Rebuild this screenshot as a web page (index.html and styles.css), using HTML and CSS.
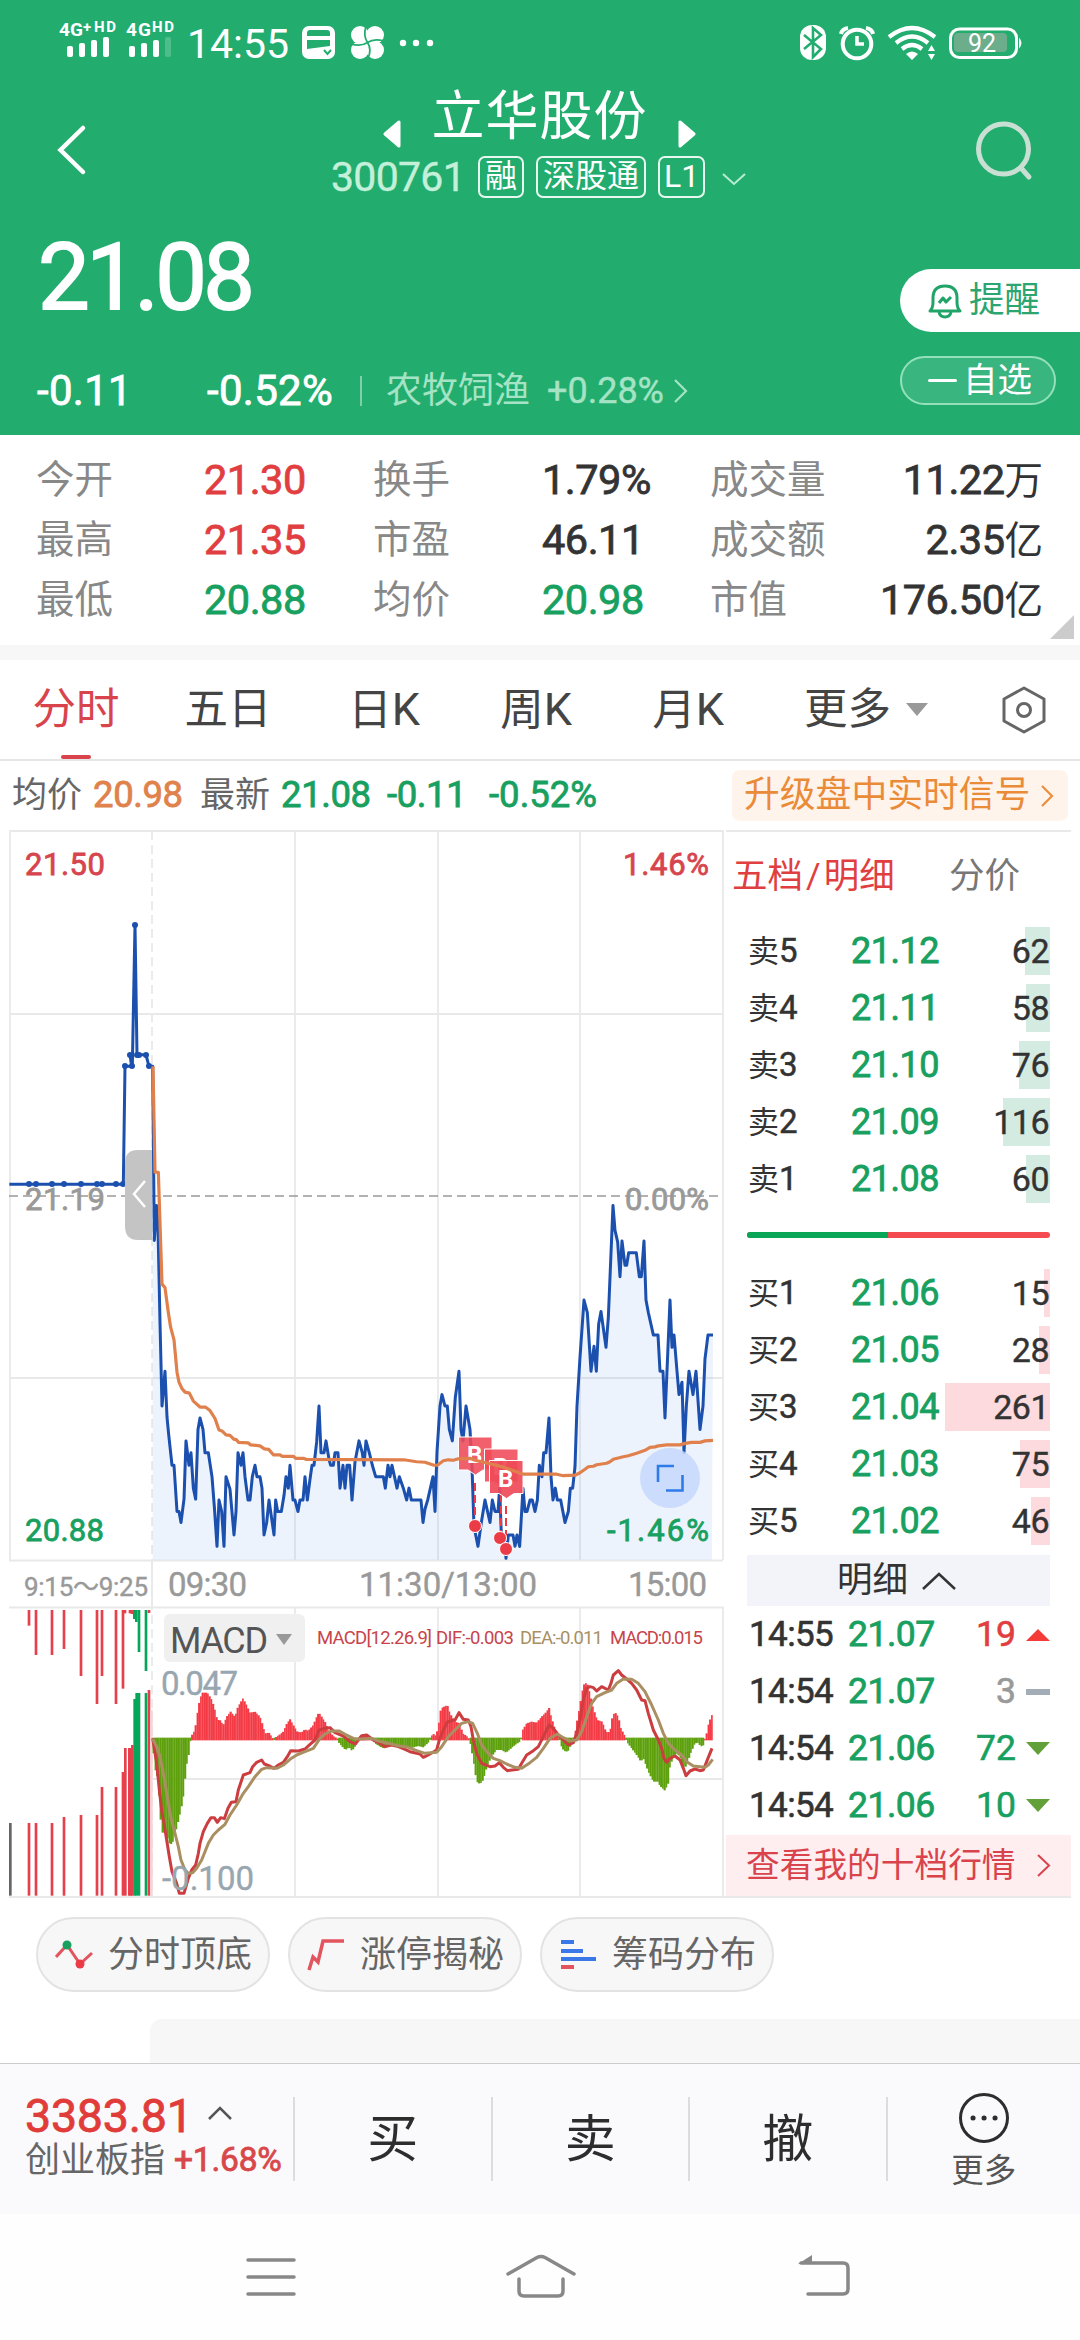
FILE: index.html
```html
<!DOCTYPE html>
<html lang="zh-CN">

<head>
    <meta charset="UTF-8">
    <meta name="viewport" content="width=device-width, initial-scale=1.0">
    <title>立华股份 300761</title>
    <link rel="stylesheet" href="styles.css">
</head>

<body>
    <header>
        <div class="statusbar">
            <svg class="signals" width="120" height="54" viewBox="58 10 120 54" fill="#fff">
                <g font-weight="700" font-size="19">
                    <text x="59" y="36" textLength="24">4G</text>
                    <text x="83" y="32" font-size="15">+</text>
                    <text x="94" y="32" font-size="15" textLength="22">HD</text>
                    <text x="126" y="36" textLength="25">4G</text>
                    <text x="152" y="32" font-size="15" textLength="22">HD</text>
                </g>
                <rect x="67" y="46" width="6" height="11" rx="2" />
                <rect x="79" y="43" width="6" height="14" rx="2" />
                <rect x="91" y="40" width="6" height="17" rx="2" />
                <rect x="103" y="37" width="6" height="20" rx="2" />
                <rect x="129" y="46" width="6" height="11" rx="2" />
                <rect x="141" y="43" width="6" height="14" rx="2" />
                <rect x="153" y="40" width="6" height="17" rx="2" />
                <rect x="165" y="37" width="6" height="20" rx="2" opacity=".2" />
            </svg>
            <span class="clock">14:55</span>
            <svg class="apps" width="134" height="36" viewBox="300 25 134 36">
                <rect x="301" y="26" width="33" height="33" rx="7" fill="#fff" />
                <path d="M306 36v-3q0-3 3-3h17q3 0 3 3v3zM306 40h23v6l-23 3z" fill="#22ad6f" />
                <path d="M323 50l3.500 4 3.500-4" fill="none" stroke="#22ad6f" stroke-width="2" />
                <g fill="#fff">
                    <circle cx="359" cy="35" r="9" />
                    <circle cx="374" cy="35" r="9" />
                    <circle cx="359" cy="50" r="9" />
                    <circle cx="374" cy="50" r="9" />
                    <rect x="359" y="35" width="15" height="15" />
                </g>
                <path d="M365 26q-3 10 1.500 16.500T367 59M350 44q10 3 16.500-1.500T383 41" fill="none" stroke="#22ad6f" stroke-width="1.800" />
                <g fill="#fff">
                    <circle cx="402" cy="43" r="3.200" />
                    <circle cx="415" cy="43" r="3.200" />
                    <circle cx="429" cy="43" r="3.200" />
                </g>
            </svg>
            <svg class="system" width="226" height="40" viewBox="797 23 226 40" fill="none" stroke="#fff">
                <rect x="799" y="25" width="26" height="35" rx="12" fill="#fff" stroke="none" />
                <path d="M803 35l17 14-8 8V28l8 7-17 14" stroke="#22ad6f" stroke-width="2.600" />
                <circle cx="856" cy="44" r="14.300" stroke-width="4" />
                <path d="M856 36v8h7" stroke-width="3.500" />
                <path d="M840 34q1-5 7-6M872 34q-1-5-7-6" stroke-width="4" />
                <path d="M888 37q23-18 46 0M895 43q16-13 32 0M901 49q10-8 20 0" stroke-width="4.200" />
                <path d="M905 54q6-5 12 0l-6 6z" fill="#fff" stroke="none" />
                <path d="M927 51l3.500-6 3.500 6zM927 54l3.500 6 3.500-6z" fill="#fff" stroke="none" />
                <rect x="953" y="33" width="53" height="19" rx="4" fill="#6cad8c" stroke="none" />
                <rect x="949.500" y="29" width="66" height="28.500" rx="9" stroke-width="3" />
                <path d="M1018 37.500q5 5.500 0 11z" fill="#fff" stroke="none" />
                <text x="967" y="52" font-size="25" fill="#fff" stroke="none">92</text>
            </svg>
        </div>

        <div class="titlebar">
            <svg width="30" height="52" viewBox="57 124 30 52" fill="none" stroke="#fff" stroke-width="4.500" stroke-linecap="round">
                <path d="M83 128L60.500 150 83 172" />
            </svg>
            <div class="stock">
                <div class="stock-name">
                    <svg width="18" height="28" viewBox="0 0 18 28"><path d="M16 2v24L2 14z" fill="#fff" stroke="#fff" stroke-width="3" stroke-linejoin="round" /></svg>
                    <h1>立华股份</h1>
                    <svg width="18" height="28" viewBox="0 0 18 28"><path d="M2 2v24l14-12z" fill="#fff" stroke="#fff" stroke-width="3" stroke-linejoin="round" /></svg>
                </div>
                <div class="stock-code">
                    <span class="code">300761</span>
                    <span class="badge">融</span>
                    <span class="badge">深股通</span>
                    <span class="badge">L1</span>
                    <svg width="24" height="14" viewBox="0 0 24 14" fill="none" stroke="#b9ecd2" stroke-width="2"><path d="M1 2l11 10L23 2" /></svg>
                </div>
            </div>
            <svg class="search" width="58" height="60" viewBox="974 121 58 60" fill="none" stroke="#c9dfd3" stroke-width="5" stroke-linecap="round">
                <circle cx="1002.500" cy="149" r="25" />
                <path d="M1020 168l8 9" />
            </svg>
        </div>

        <div class="quote">
            <div>
                <div class="price">21.08</div>
                <div class="change">
                    <span class="diff">-0.11</span>
                    <span class="percent">-0.52%</span>
                    <span class="line"></span>
                    <span class="sector">农牧饲渔</span>
                    <span class="sector-percent">+0.28%</span>
                    <svg width="16" height="26" viewBox="0 0 16 26" fill="none" stroke="#a5e3c5" stroke-width="2.200"><path d="M2 2l11 11L2 24" /></svg>
                </div>
            </div>
            <div class="actions">
                <div class="remind">
                    <svg width="34" height="36" viewBox="928 283 34 36" fill="none" stroke="#22a468" stroke-width="3" stroke-linejoin="round">
                        <path d="M930 311q3-3 3-9v-4q0-12 12-12t12 12v4q0 6 3 9z" />
                        <path d="M939 312q1 5 6 5t6-5" />
                        <path d="M939 303l4-5 3 4 5-5" />
                    </svg>
                    提醒
                </div>
                <div class="watch"><i></i>自选</div>
            </div>
        </div>
    </header>

    <section class="stats">
        <span>今开</span><b class="red">21.30</b><span>换手</span><b>1.79%</b><span>成交量</span><b class="end">11.22<em>万</em></b>
        <span>最高</span><b class="red">21.35</b><span>市盈</span><b>46.11</b><span>成交额</span><b class="end">2.35<em>亿</em></b>
        <span>最低</span><b class="green">20.88</b><span>均价</span><b class="green">20.98</b><span>市值</span><b class="end">176.50<em>亿</em></b>
        <i class="corner"></i>
    </section>

    <nav class="tabs">
        <span class="active">分时</span>
        <span>五日</span>
        <span>日<u>K</u></span>
        <span>周<u>K</u></span>
        <span>月<u>K</u></span>
        <span class="more">更多<i></i></span>
        <svg width="46" height="50" viewBox="0 0 46 50" fill="none" stroke="#666" stroke-width="3" stroke-linejoin="round">
            <path d="M23 3l20 11v22L23 47 3 36V14z" />
            <circle cx="23" cy="25" r="6.500" />
        </svg>
    </nav>

    <div class="summary">
        <span>均价</span><b class="orange">20.98</b>
        <span>最新</span><b class="green now">21.08</b><b class="green chg">-0.11</b><b class="green pct">-0.52%</b>
        <div class="upgrade">升级盘中实时信号
            <svg width="14" height="24" viewBox="0 0 14 24" fill="none" stroke="#ea8f3c" stroke-width="2.200"><path d="M2 2l10 10L2 22" /></svg>
        </div>
    </div>

    <main>
        <svg class="chart" width="726" height="1068" viewBox="0 830 726 1068">
            <!-- grid -->
            <g class="grid">
                <path d="M10 1561V831H723V1560M10 1014H723M10 1378H723M9 1560.500H723M295 831V1560M438 831V1560M580 831V1560" />
                <path d="M9 1607.500H723V1896M295 1607V1896M438 1607V1896M580 1607V1896M152 1779H723M152 1560V1608M9 1897H726" />
                <path d="M152 831V1896" stroke-dasharray="9 5" />
            </g>
            <path d="M9 1196H723" stroke="#999" stroke-width="1.600" stroke-dasharray="9 5" />

            <!-- price -->
            <g transform="matrix(.33333 0 0 .4975 0 820)">
                <path id="area" />
                <polyline id="price" class="curve blue" points="28,732 370,732 375,495 395,495 390,472 397,495 405,211 411,472 438,472 447,495 458,495 463,845 470,775 474,820 480,1010 486,1178 495,1108 501,1200 506,1235 512,1272 516,1297 522,1297 531,1390 537,1390 543,1412 552,1365 558,1248 567,1297 573,1272 580,1343 587,1365 594,1225 600,1202 609,1225 615,1272 625,1272 636,1320 643,1380 651,1460 657,1367 665,1390 672,1460 678,1320 690,1345 702,1437 708,1390 714,1272 723,1297 729,1272 735,1320 744,1367 750,1367 757,1320 765,1297 771,1320 780,1320 786,1343 792,1437 800,1412 807,1367 822,1437 827,1367 833,1390 844,1390 852,1358 858,1320 865,1343 870,1297 879,1367 885,1367 894,1390 900,1367 909,1367 915,1320 922,1367 930,1325 936,1297 942,1297 950,1250 957,1178 963,1272 972,1272 978,1248 987,1285 992,1297 1000,1297 1005,1272 1014,1272 1020,1343 1029,1297 1035,1343 1041,1297 1049,1297 1056,1367 1065,1290 1077,1248 1087,1272 1092,1297 1098,1248 1108,1272 1117,1297 1127,1320 1150,1320 1156,1343 1164,1297 1170,1320 1176,1297 1191,1343 1198,1320 1210,1343 1220,1367 1227,1343 1234,1367 1263,1367 1269,1412 1275,1385 1283,1367 1299,1320 1305,1390 1311,1270 1320,1178 1326,1155 1335,1178 1342,1178 1348,1225 1357,1248 1366,1160 1377,1108 1383,1225 1389,1248 1398,1178 1410,1225 1416,1300 1422,1420 1434,1460 1444,1412 1455,1367 1470,1412 1477,1367 1485,1390 1494,1390 1499,1343 1504,1437 1512,1437 1518,1484 1525,1437 1539,1437 1545,1460 1551,1437 1559,1460 1569,1343 1575,1390 1581,1390 1590,1367 1597,1367 1605,1390 1612,1367 1618,1297 1626,1320 1631,1272 1638,1272 1647,1202 1653,1320 1659,1367 1666,1343 1672,1367 1682,1367 1695,1412 1705,1390 1711,1343 1718,1343 1725,1300 1731,1178 1740,1080 1752,965 1762,990 1773,1108 1782,1058 1789,1108 1796,1013 1803,988 1818,1060 1825,1000 1839,775 1845,825 1853,848 1860,918 1866,846 1875,895 1880,895 1886,870 1909,870 1918,918 1924,918 1932,846 1938,965 1945,990 1960,1035 1974,1035 1980,1108 1989,1108 1995,1202 2010,965 2016,1060 2022,1035 2031,1108 2037,1155 2046,1130 2052,1272 2059,1178 2067,1108 2079,1155 2088,1108 2100,1225 2109,1178 2115,1083 2124,1035 2139,1035" />
            </g>
            <g class="dots" id="dots"></g>

            <path d="M152 1150h-14q-13 0-13 13v63q0 14 13 14h14z" fill="#c4c4c4" />
            <path d="M145 1181l-11 13 11 13" fill="none" stroke="#fff" stroke-width="2.500" />

            <!-- trade markers -->
            <g class="marker">
                <path d="M475 1483V1520M501 1494V1532M506 1506V1543" stroke="#eb3b47" stroke-width="2" stroke-dasharray="8 4" />
                <g fill="#eb3b47" stroke="#fff">
                    <circle cx="475" cy="1526" r="6.500" />
                    <circle cx="500" cy="1538" r="6.500" />
                    <circle cx="506" cy="1549" r="6.500" />
                </g>
                <g fill="#ef4a58" fill-opacity=".88" stroke="#fff">
                    <path d="M458.500 1437h33.500v33h-9l-7.500 5-7.500-5h-9.500z" />
                    <path d="M484.500 1449h33.500v33h-9l-7.500 5-7.500-5h-9.500z" />
                </g>
                <text x="467" y="1463">B</text>
                <text x="493" y="1475">B</text>
                <path d="M489.500 1460.500h33.500v33h-9l-7.500 5-7.500-5h-9.500z" fill="#ef4a58" fill-opacity=".92" stroke="#fff" />
                <text x="498" y="1487">B</text>
            </g>
            <circle cx="670" cy="1478" r="30" fill="#c5d7fd" fill-opacity=".85" />
            <path d="M658 1482V1466H674M666 1490.500H682.500V1475" fill="none" stroke="#2f7bea" stroke-width="2.600" />
            <g transform="matrix(.33333 0 0 .4975 0 820)">
                <polyline class="curve avg" points="459,495 465,708 475,708 486,933 495,940 505,990 512,1020 522,1045 531,1110 537,1130 546,1143 555,1150 568,1152 580,1168 600,1180 616,1180 630,1187 645,1203 657,1226 666,1228 678,1236 690,1237 702,1245 708,1245 716,1251 744,1252 752,1256 780,1258 793,1264 806,1265 820,1276 840,1276 847,1279 880,1279 887,1283 910,1283 918,1285 1212,1286 1250,1290 1275,1291 1302,1297 1312,1297 1330,1288 1345,1286 1360,1287 1375,1284 1410,1283 1425,1287 1445,1290 1470,1294 1495,1298 1520,1303 1545,1309 1570,1315 1670,1315 1690,1318 1725,1317 1740,1312 1755,1305 1765,1300 1780,1299 1790,1296 1820,1293 1830,1290 1840,1285 1870,1280 1885,1278 1910,1273 1935,1267 1950,1261 1965,1260 1975,1258 2000,1256 2040,1256 2055,1253 2075,1251 2100,1251 2115,1248 2139,1247" />
            </g>

            <g class="axis">
                <text x="25" y="875" fill="#d6454e" stroke="#d6454e" textLength="80">21.50</text>
                <text x="25" y="1210" fill="#999" stroke="#999" textLength="80">21.19</text>
                <text x="25" y="1541" fill="#17a05f" stroke="#17a05f" textLength="79">20.88</text>
                <text x="623" y="875" fill="#d6454e" stroke="#d6454e" textLength="86">1.46%</text>
                <text x="625" y="1210" fill="#999" stroke="#999" textLength="84">0.00%</text>
                <text x="607" y="1541" fill="#17a05f" stroke="#17a05f" textLength="102">-1.46%</text>
            </g>
            <g class="time">
                <text x="24" y="1596" font-size="26" textLength="124">9:15～9:25</text>
                <text x="168" y="1596" textLength="79">09:30</text>
                <text x="359" y="1596" textLength="178">11:30/13:00</text>
                <text x="628" y="1596" textLength="79">15:00</text>
            </g>

            <!-- call auction volume and MACD -->
            <g transform="matrix(.33333 0 0 .33333 0 1550)">
                <g id="bars"></g>
                <polyline class="curve dif" points="458,565 470,640 478,720 486,790 492,820 500,870 508,920 516,965 524,985 530,1000 538,1030 552,1030 565,985 575,960 587,945 595,910 600,880 610,845 622,820 633,803 643,803 652,817 662,803 673,806 684,775 694,757 708,755 715,720 730,675 750,668 758,650 770,637 785,630 793,642 805,646 822,655 835,645 850,637 862,620 872,602 895,603 915,597 930,583 945,570 957,540 975,535 990,533 1005,548 1030,558 1050,575 1066,582 1075,570 1085,557 1100,555 1120,570 1140,580 1155,590 1175,585 1195,590 1215,598 1230,605 1260,612 1270,622 1285,615 1310,600 1318,570 1330,540 1343,515 1365,510 1377,488 1390,508 1405,510 1413,530 1420,570 1430,610 1445,640 1470,650 1485,648 1498,638 1510,652 1522,662 1555,658 1565,640 1580,615 1600,602 1615,590 1630,560 1647,525 1660,535 1675,555 1690,570 1705,585 1720,578 1730,550 1740,510 1750,450 1760,415 1770,410 1780,413 1790,423 1805,410 1825,420 1833,400 1840,375 1855,362 1865,375 1880,387 1895,400 1910,420 1925,450 1935,452 1945,490 1960,540 1975,570 1985,595 1992,625 2000,637 2010,625 2025,618 2040,630 2050,655 2058,677 2070,663 2085,657 2100,662 2110,660 2120,635 2136,595" />
                <polyline class="curve dea" points="458,567 470,590 480,620 490,670 500,730 512,800 525,850 535,890 543,930 555,960 565,970 578,968 590,955 605,930 625,880 640,855 655,840 675,823 690,795 710,765 730,730 745,710 765,680 785,658 800,653 830,655 850,645 870,628 890,615 915,605 940,595 960,565 975,552 995,543 1018,543 1035,553 1065,567 1090,567 1115,565 1135,573 1165,580 1195,587 1225,592 1250,602 1275,610 1310,607 1325,590 1345,560 1365,540 1385,520 1405,515 1418,520 1432,550 1445,585 1460,605 1480,625 1500,632 1520,642 1545,652 1565,655 1590,638 1610,622 1630,595 1650,565 1672,552 1690,563 1710,573 1730,570 1745,545 1760,500 1775,460 1790,440 1815,428 1835,420 1850,400 1870,387 1895,388 1915,400 1935,425 1955,465 1975,510 1990,550 2005,580 2025,600 2045,615 2060,635 2080,648 2100,650 2115,652 2125,645 2138,628" />
            </g>
            <rect x="164" y="1614" width="141" height="48" rx="6" fill="#f0f0f0" />
            <text x="170" y="1653" font-size="36" fill="#555" textLength="98">MACD</text>
            <path d="M276 1634h16l-8 11z" fill="#999" />
            <g class="axis macd-range">
                <text x="161" y="1695" textLength="77">0.047</text>
                <text x="162" y="1890" textLength="92">-0.100</text>
            </g>
            <g class="legend">
                <text x="317" y="1644" textLength="115">MACD[12.26.9]</text>
                <text x="436" y="1644" textLength="78">DIF:-0.003</text>
                <text x="520" y="1644" textLength="83" fill="#a98f62">DEA:-0.011</text>
                <text x="610" y="1644" textLength="93">MACD:0.015</text>
            </g>
        </svg>

        <aside>
            <div class="book-tabs"><span class="red">五档<u>/</u>明细</span><span>分价</span></div>
            <div class="book sell">
                <div class="row"><span>卖<u>5</u></span><b>21.12</b><em style="--w: 25px">62</em></div>
                <div class="row"><span>卖<u>4</u></span><b>21.11</b><em style="--w: 24px">58</em></div>
                <div class="row"><span>卖<u>3</u></span><b>21.10</b><em style="--w: 31px">76</em></div>
                <div class="row"><span>卖<u>2</u></span><b>21.09</b><em style="--w: 47px">116</em></div>
                <div class="row"><span>卖<u>1</u></span><b>21.08</b><em style="--w: 24px">60</em></div>
            </div>
            <div class="ratio"><i></i></div>
            <div class="book buy">
                <div class="row"><span>买<u>1</u></span><b>21.06</b><em style="--w: 6px">15</em></div>
                <div class="row"><span>买<u>2</u></span><b>21.05</b><em style="--w: 11px">28</em></div>
                <div class="row"><span>买<u>3</u></span><b>21.04</b><em style="--w: 106px">261</em></div>
                <div class="row"><span>买<u>4</u></span><b>21.03</b><em style="--w: 30px">75</em></div>
                <div class="row"><span>买<u>5</u></span><b>21.02</b><em style="--w: 19px">46</em></div>
            </div>
            <div class="detail-head">明细
                <svg width="34" height="20" viewBox="0 0 34 20" fill="none" stroke="#333" stroke-width="2.500"><path d="M1 18L17 3l16 15" /></svg>
            </div>
            <div class="trades">
                <div class="trade"><span>14:55</span><b>21.07</b><em class="red">19</em><i class="up"></i></div>
                <div class="trade"><span>14:54</span><b>21.07</b><em class="flat">3</em><i class="same"></i></div>
                <div class="trade"><span>14:54</span><b>21.06</b><em class="green">72</em><i class="down"></i></div>
                <div class="trade"><span>14:54</span><b>21.06</b><em class="green">10</em><i class="down"></i></div>
            </div>
            <div class="ten-level">查看我的十档行情
                <svg width="15" height="25" viewBox="0 0 15 25" fill="none" stroke="#d9434c" stroke-width="2"><path d="M2 2l11 10.500L2 23" /></svg>
            </div>
        </aside>
    </main>

    <div class="tools">
        <div class="chip">
            <svg width="38" height="32" viewBox="0 0 38 32" fill="none" stroke="#e2545e" stroke-width="3">
                <path d="M1 18L12 6l13 19 12-11" />
                <circle cx="12" cy="6" r="4.500" fill="#17a05f" stroke="none" />
                <circle cx="25" cy="25" r="4.500" fill="#eb3b47" stroke="none" />
            </svg>
            分时顶底
        </div>
        <div class="chip">
            <svg width="38" height="32" viewBox="0 0 38 32" fill="none" stroke="#e2545e" stroke-width="3.500">
                <path d="M2 31l4-13 5 5 5-21h21" />
            </svg>
            涨停揭秘
        </div>
        <div class="chip">
            <svg width="38" height="32" viewBox="0 0 38 32" stroke="#3a78e8" stroke-width="4">
                <path d="M2 3h13M2 12h22M2 20h35" />
                <path d="M2 28h13" stroke="#e2545e" />
            </svg>
            筹码分布
        </div>
    </div>
    <div class="next-card"></div>

    <footer>
        <div class="index">
            <div class="index-top"><b>3383.81</b>
                <svg width="26" height="16" viewBox="0 0 26 16" fill="none" stroke="#555" stroke-width="2.500"><path d="M2 14L13 3l11 11" /></svg>
            </div>
            <div class="index-bottom">创业板指<b>+1.68%</b></div>
        </div>
        <div class="trade-btn">买</div>
        <div class="trade-btn">卖</div>
        <div class="trade-btn">撤</div>
        <div class="more-btn">
            <svg width="52" height="52" viewBox="0 0 52 52" fill="none" stroke="#2d2d2d" stroke-width="3">
                <circle cx="26" cy="26" r="23.500" />
                <path d="M15 26h.1M26 26h.1M37 26h.1" stroke-width="5" stroke-linecap="round" />
            </svg>
            更多
        </div>
    </footer>

    <div class="navbar">
        <svg width="52" height="46" viewBox="0 0 52 46" stroke="#888" stroke-width="3.500" stroke-linecap="round"><path d="M3 6h46M3 23h46M3 40h46" /></svg>
        <svg width="72" height="46" viewBox="0 0 72 46" fill="none" stroke="#888" stroke-width="3.500" stroke-linecap="round" stroke-linejoin="round"><path d="M3 20L32 3.500q4-2 8 0L69 20M14 25v12q0 5 5 5h34q5 0 5-5V25" /></svg>
        <svg width="56" height="46" viewBox="0 0 56 46" fill="none" stroke="#888" stroke-width="3.500" stroke-linecap="round"><path d="M5 9h42q5 0 5 5v21q0 5-5 5H12" /><path d="M2 10L16 1v9z" fill="#888" stroke="none" /></svg>
    </div>

    <script>
        const bars = document.getElementById("bars");
        const dots = document.getElementById("dots");
        const price = document.getElementById("price").getAttribute("points").split(" ");
        const zero = 567;

        // histogram outline: x, y
        const macd = [
            [458, 580], [466, 660], [475, 690], [478, 770], [486, 848], [497, 848], [510, 885], [518, 878], [530, 835], [543, 780],
            [552, 730], [558, 655], [567, 610], [572, 567], [576, 555], [585, 540], [592, 490], [600, 445], [608, 428], [622, 428],
            [636, 450], [645, 480], [652, 510], [660, 510], [670, 525], [680, 500], [692, 485], [705, 500], [714, 470], [729, 445],
            [740, 465], [750, 488], [765, 485], [780, 500], [790, 530], [795, 550], [807, 548], [817, 562], [822, 573], [827, 562],
            [840, 553], [850, 545], [860, 522], [870, 507], [880, 525], [892, 545], [905, 547], [915, 538], [925, 542], [940, 525],
            [950, 500], [957, 487], [965, 500], [978, 520], [985, 540], [1000, 558], [1012, 565], [1018, 580], [1025, 588], [1036, 600],
            [1047, 592], [1056, 603], [1065, 590], [1074, 570], [1080, 560], [1098, 555], [1112, 562], [1125, 580], [1140, 590], [1152, 595],
            [1170, 588], [1210, 590], [1230, 595], [1255, 588], [1270, 592], [1285, 578], [1292, 567], [1298, 550], [1308, 558], [1315, 530],
            [1323, 475], [1342, 465], [1350, 490], [1365, 515], [1380, 520], [1388, 550], [1400, 558], [1408, 567], [1413, 590], [1420, 630],
            [1430, 695], [1440, 702], [1450, 690], [1458, 660], [1465, 640], [1475, 620], [1490, 600], [1505, 600], [1518, 608], [1530, 598],
            [1545, 585], [1560, 575], [1564, 567], [1568, 540], [1580, 520], [1595, 515], [1610, 518], [1625, 500], [1640, 485], [1647, 472],
            [1655, 505], [1665, 535], [1677, 560], [1682, 585], [1692, 603], [1704, 605], [1715, 580], [1722, 567], [1730, 520], [1740, 465],
            [1750, 405], [1761, 397], [1770, 430], [1780, 475], [1792, 510], [1807, 515], [1818, 545], [1825, 548], [1832, 535], [1838, 495],
            [1846, 488], [1855, 500], [1863, 535], [1875, 558], [1880, 575], [1895, 595], [1910, 615], [1923, 635], [1930, 625], [1945, 665],
            [1960, 695], [1973, 695], [1980, 708], [1995, 722], [2005, 700], [2010, 650], [2020, 620], [2030, 610], [2040, 620], [2050, 650],
            [2060, 650], [2070, 615], [2085, 580], [2095, 578], [2102, 590], [2112, 585], [2115, 565], [2120, 550], [2126, 520], [2137, 492]
        ];

        // call auction: x, y, color
        const unmatched = [
            [87, 227, "r"], [108, 315, "r"], [156, 315, "r"], [192, 297, "r"], [243, 378, "r"], [291, 462, "r"], [306, 378, "r"],
            [348, 462, "r"], [369, 416, "r"], [375, 190, "r"], [390, 190, "r"], [396, 192, "r"], [403, 207, "g"], [409, 216, "g"],
            [417, 306, "g"], [438, 363, "g"], [447, 189, "r"]
        ];
        const matched = [
            [31, 819, "k"], [87, 819, "r"], [108, 819, "r"], [156, 819, "r"], [192, 801, "r"], [243, 795, "r"], [291, 795, "r"],
            [306, 711, "r"], [348, 711, "r"], [369, 666, "r"], [376, 594, "r"], [388, 594, "r"], [392, 594, "r"],
            [397, 585, "r"], [404, 447, "g"], [410, 429, "g"], [417, 429, "g"], [438, 429, "g"], [447, 420, "r"], [454, 480, "p"]
        ];
        const colors = { r: "#e5404b", g: "#06a65a", k: "#666", p: "#fbd3d5" };

        function bar(x, y1, y2, w, color) {
            return `<rect x="${x - w / 2}" y="${Math.min(y1, y2)}" width="${w}" height="${Math.abs(y2 - y1)}" fill="${color}"/>`;
        }

        let html = "";
        unmatched.forEach(e => { html += bar(e[0], 180, e[1], 8, colors[e[2]]); });
        matched.forEach(e => { html += bar(e[0], 1037, e[1], 8, colors[e[2]]); });

        // narrow bars side by side, a thin light gap after every second one
        let n = 0;
        for (let x = 461; x < 2140; x += 5.25) {
            let i = macd.findIndex(p => p[0] >= x);
            if (i < 1) continue;
            let a = macd[i - 1], b = macd[i];
            let y = a[1] + (b[1] - a[1]) * (x - a[0]) / (b[0] - a[0]);
            let up = y < zero;
            html += bar(x, up ? zero + 4 : zero - 4, y, n % 2 ? 5 : 6.5, up ? "#f43b45" : "#5da00c");
            n++;
        }
        bars.innerHTML = html;

        // fill below the price line, from the open on
        const open = price.slice(price.indexOf("458,495"));
        document.getElementById("area").setAttribute("d", "M458,1487 L" + open.join(" ") + " L2136,1487Z");

        [[29, 1184], [36, 1184], [52, 1184], [64, 1184], [81, 1184], [97, 1184], [102, 1184], [116, 1184], [123, 1184],
        [125, 1066], [130, 1055], [132, 1066], [135, 925], [137, 1055], [139, 1055], [146, 1055], [149, 1066]].forEach(e => {
            dots.innerHTML += `<circle cx="${e[0]}" cy="${e[1]}" r="3"/>`;
        });
    </script>
</body>

</html>
```
FILE: styles.css
```css
* {
    margin: 0;
    padding: 0;
    box-sizing: border-box;
}

body {
    width: 1080px;
    height: 2340px;
    overflow: hidden;
    background: #fff;
    color: #333;
    font-family: Roboto, "Noto Sans CJK SC", sans-serif;
    line-height: 1;
}

svg {
    display: block;
    flex-shrink: 0;
}

/* figures sit between regular and medium */
b,
.diff,
.percent {
    font-weight: 400;
    -webkit-text-stroke: .8px currentColor;
}

i,
em {
    font-style: normal;
}

u {
    text-decoration: none;
}

/* Utility css */

.red {
    color: #e03e40 !important;
}

.green {
    color: #17a05f !important;
}

.orange {
    color: #e0824c;
}

/* header */

header {
    height: 435px;
    background: #22ad6f;
    color: #fff;
}

.statusbar {
    height: 84px;
    padding: 10px 56px 0 58px;
    display: flex;
}

.clock {
    width: 104px;
    margin: 14px 12px 0 9px;
    font-size: 41px;
}

.statusbar .apps {
    margin-top: 15px;
    margin-left: -2px;
}

.statusbar .system {
    margin-top: 13px;
    margin-left: auto;
}

.titlebar {
    height: 126px;
    padding: 0 47px 0 57px;
    display: flex;
}

.titlebar > svg {
    margin-top: 40px;
}

.titlebar .search {
    margin-top: 37px;
    margin-left: auto;
}

.stock {
    width: 420px;
    margin-left: 244px;
}

.stock-name {
    width: 416px;
    display: flex;
    align-items: center;
    justify-content: center;
    gap: 31px;
}

.stock-name svg {
    margin-top: 34px;
}

.stock-name h1 {
    font-size: 53px;
    font-weight: 400;
    line-height: 66px;
    letter-spacing: 1px;
    margin-right: -1px;
}

.stock-code {
    display: flex;
    align-items: center;
    height: 42px;
    margin-top: 6px;
    gap: 12px;
}

.code {
    font-size: 41px;
    letter-spacing: -.700px;
    color: #c4f0da;
    width: 135px;
    -webkit-text-stroke: .4px currentColor;
}

.badge {
    height: 42px;
    padding: 0 5px;
    border: 2px solid #e6f8ef;
    border-radius: 7px;
    font-size: 32px;
    line-height: 37px;
}

.badge:nth-child(4) {
    padding: 0 4px;
}

.stock-code svg {
    margin: 3px 0 0 5px;
}

.quote {
    display: flex;
    justify-content: space-between;
}

.price {
    margin: 22px 0 0 38px;
    height: 92px;
    font-size: 92px;
    letter-spacing: -3.500px;
    white-space: nowrap;
    -webkit-text-stroke: 1.800px currentColor;
}

.change {
    display: flex;
    align-items: center;
    height: 50px;
    margin-top: 42px;
    padding-left: 37px;
    white-space: nowrap;
}

.diff,
.percent {
    font-size: 42px;
    letter-spacing: .300px;
}

.diff {
    width: 170px;
}

.percent {
    width: 153px;
}

.line {
    width: 2px;
    height: 30px;
    background: #7fcfa8;
}

.sector {
    width: 161px;
    margin-left: 24px;
    font-size: 36px;
    color: #a5e3c5;
}

.sector-percent {
    width: 126px;
    font-size: 36px;
    color: #a5e3c5;
    -webkit-text-stroke: .4px currentColor;
}

.remind {
    width: 180px;
    height: 63px;
    margin-top: 59px;
    padding-left: 28px;
    display: flex;
    align-items: center;
    gap: 7px;
    background: #fff;
    border-radius: 32px 0 0 32px;
    color: #2da571;
    font-size: 35.500px;
}

.watch {
    width: 156px;
    height: 49px;
    margin-top: 24px;
    padding-left: 26px;
    display: flex;
    align-items: center;
    gap: 6px;
    background: #39b57f;
    border: 2px solid #93e0bb;
    border-radius: 25px;
    font-size: 34.500px;
}

.watch i {
    width: 29px;
    height: 3px;
    border-radius: 2px;
    background: #fff;
}

/* figures */

.stats {
    position: relative;
    height: 225px;
    padding: 15px 37px 0 36px;
    display: grid;
    grid-template-columns: 168px 169px 169px 168px 140px 193px;
    grid-auto-rows: 60px;
    align-items: center;
    border-bottom: 15px solid #f7f7f7;
}

.stats span {
    font-size: 38.500px;
    color: #888;
}

.stats b {
    font-size: 41.500px;
    letter-spacing: -.500px;
    white-space: nowrap;
}

.stats b em {
    font-size: 38.500px;
    letter-spacing: 0;
    -webkit-text-stroke: 0;
}

.stats .end {
    text-align: right;
}

.corner {
    position: absolute;
    right: 6px;
    bottom: 6px;
    border-left: 24px solid transparent;
    border-bottom: 24px solid #ccc;
}

/* period tabs */

.tabs {
    display: flex;
    align-items: center;
    height: 101px;
    border-bottom: 2px solid #e6e6e6;
    font-size: 43.500px;
    color: #444;
}

.tabs span {
    position: relative;
    width: 152px;
    height: 99px;
    line-height: 99px;
    text-align: center;
}

.tabs span:nth-child(3) {
    width: 160px;
}

.tabs span:nth-child(4) {
    width: 144px;
}

.tabs span:nth-child(5) {
    width: 160px;
}

.tabs u {
    font-size: 45px;
}

.tabs .active {
    color: #d9434c;
}

.tabs .active::after {
    content: "";
    position: absolute;
    left: 61px;
    bottom: 0;
    width: 30px;
    height: 4px;
    border-radius: 2px;
    background: #d9434c;
}

.tabs .more {
    width: 159px;
    margin-left: 36px;
    text-align: left;
    display: flex;
    align-items: center;
    gap: 15px;
}

.more i {
    border: 11px solid transparent;
    border-top: 13px solid #999;
    border-bottom: 0;
}

.tabs svg {
    margin-left: 38px;
}

.summary {
    height: 69px;
    padding: 0 12px;
    display: flex;
    align-items: center;
    font-size: 35px;
    color: #666;
}

.summary b {
    width: 107px;
    margin-left: 11px;
    font-size: 36.500px;
    letter-spacing: -.400px;
    white-space: nowrap;
}

.summary .now {
    width: 95px;
}

.summary .chg {
    width: 91px;
}

.summary .pct {
    width: 112px;
    letter-spacing: 0;
}

.upgrade {
    width: 336px;
    height: 51px;
    margin-left: auto;
    padding-left: 12px;
    display: flex;
    align-items: center;
    gap: 10px;
    border-radius: 8px;
    background: #fff4ec;
    color: #ea8b38;
    font-size: 35.800px;
    white-space: nowrap;
}

/* charts */

main {
    display: flex;
    height: 1068px;
}

.grid path {
    fill: none;
    stroke: #e9e9e9;
    stroke-width: 1.800px;
}

.curve {
    fill: none;
    stroke-width: 3px;
    stroke-linejoin: round;
    vector-effect: non-scaling-stroke;
}

.blue {
    stroke: #1c50ae;
}

.avg {
    stroke: #e0804c;
    stroke-width: 3.200px;
}

.dif {
    stroke: #cc3d40;
}

.dea {
    stroke: #a98f62;
}

#area {
    fill: #4d86ee;
    fill-opacity: .1;
}

.dots {
    fill: #1c50ae;
}

.marker text {
    font-size: 24px;
    font-weight: 700;
    fill: #fff;
}

.axis text {
    font-size: 31px;
    stroke-width: .800px;
}

.axis.macd-range text {
    fill: #98a6b0;
    stroke: #98a6b0;
    stroke-width: .400px;
    font-size: 33px;
}

.time {
    fill: #999;
    stroke: #999;
    stroke-width: .400px;
    font-size: 33px;
}

.legend {
    font-size: 18.500px;
    fill: #c8444a;
}

/* order book */

aside {
    width: 345px;
    border-top: 2px solid #e9e9e9;
    border-bottom: 2px solid #e9e9e9;
    white-space: nowrap;
}

.book-tabs {
    height: 90px;
    padding: 0 51px 0 6px;
    display: flex;
    align-items: center;
    justify-content: space-between;
    font-size: 35.500px;
    color: #777;
}

.book-tabs u {
    margin: 0 3px;
}

.book {
    padding: 0 21px;
}

.row {
    height: 57px;
    display: grid;
    grid-template-columns: 104px 94px 105px;
    align-items: center;
}

.row span {
    padding-left: 1px;
    font-size: 31px;
}

.row u {
    font-size: 33px;
    -webkit-text-stroke: .5px currentColor;
}

.row b {
    font-size: 36px;
    letter-spacing: -.500px;
    color: #17a05f;
}

.row em {
    height: 48px;
    padding-right: 1px;
    font-size: 34px;
    line-height: 48px;
    letter-spacing: -.500px;
    text-align: right;
    -webkit-text-stroke: .4px currentColor;
    background: linear-gradient(#d3ebe1, #d3ebe1) right / var(--w) 100% no-repeat;
}

.buy .row em {
    background-image: linear-gradient(#fcdadd, #fcdadd);
}

.ratio {
    width: 303px;
    height: 6px;
    margin: 25px 21px 26px;
    border-radius: 3px;
    background: #f44b50;
    overflow: hidden;
}

.ratio i {
    display: block;
    width: 141px;
    height: 6px;
    background: #0aa658;
}

.detail-head {
    width: 303px;
    height: 51px;
    margin: 6px 21px 0;
    padding-right: 4px;
    display: flex;
    align-items: center;
    justify-content: center;
    gap: 14px;
    background: #f2f4f9;
    font-size: 35.500px;
}

.trades {
    padding: 0 21px;
}

.trade {
    height: 57px;
    display: grid;
    grid-template-columns: 101px 84px 84px 34px;
    align-items: center;
    font-size: 35.500px;
}

.trade span {
    font-size: 35px;
    letter-spacing: -.600px;
    padding-left: 2px;
    -webkit-text-stroke: .6px currentColor;
}

.trade b {
    color: #17a05f;
    letter-spacing: -.500px;
}

.trade em {
    text-align: right;
    -webkit-text-stroke: .6px currentColor;
}

.trade .flat {
    color: #999;
}

.trade i {
    justify-self: end;
}

.up {
    border: 12px solid transparent;
    border-bottom: 12px solid #f43b38;
    border-top: 0;
}

.down {
    border: 12px solid transparent;
    border-top: 13px solid #62a03a;
    border-bottom: 0;
}

.same {
    width: 24px;
    height: 6px;
    background: #a3adb8;
}

.ten-level {
    height: 61px;
    margin-top: 1px;
    padding-left: 20px;
    display: flex;
    align-items: center;
    gap: 20px;
    background: #feeef0;
    color: #d9434c;
    font-size: 33.700px;
}

/* bottom */

.tools {
    height: 121px;
    padding: 19px 36px 0;
    display: flex;
    gap: 18px;
}

.chip {
    width: 234px;
    height: 75px;
    padding-left: 17px;
    display: flex;
    align-items: center;
    gap: 15px;
    border: 2px solid #e3e3e3;
    border-radius: 38px;
    background: #f7f7f7;
    color: #666;
    font-size: 36px;
    white-space: nowrap;
}

.next-card {
    height: 44px;
    margin-left: 150px;
    border-radius: 12px 0 0 0;
    background: #f7f7f7;
}

footer {
    height: 151px;
    display: flex;
    align-items: center;
    border-top: 1px solid #ccc;
    background: #fafafc;
}

.index {
    width: 293px;
    padding-left: 25px;
    margin-top: -6px;
}

.index-top {
    display: flex;
    align-items: center;
    gap: 14px;
    margin-bottom: 6px;
}

.index-top svg {
    margin-top: -5px;
}

.index-top b {
    font-size: 46.500px;
    line-height: 42px;
    letter-spacing: -.200px;
    color: #e03c3a;
}

.index-bottom {
    display: flex;
    align-items: center;
    gap: 9px;
    font-size: 35px;
    color: #666;
    white-space: nowrap;
}

.index-bottom b {
    font-size: 33.500px;
    letter-spacing: -.200px;
    color: #d8484a;
}

.trade-btn {
    width: 197.500px;
    height: 84px;
    border-left: 2px solid #dcdce0;
    font-size: 51px;
    line-height: 85px;
    text-align: center;
    color: #2d2d2d;
}

.more-btn {
    flex: 1;
    height: 84px;
    padding-top: 2px;
    display: flex;
    flex-direction: column;
    align-items: center;
    justify-content: center;
    gap: 11px;
    border-left: 2px solid #dcdce0;
    font-size: 32.500px;
    color: #555;
}

.navbar {
    height: 126px;
    padding: 0 228px 0 245px;
    display: flex;
    align-items: center;
    background: #fefefe;
}

.navbar svg:nth-child(2) {
    margin-left: 208px;
}

.navbar svg:nth-child(3) {
    margin-left: auto;
}
```
